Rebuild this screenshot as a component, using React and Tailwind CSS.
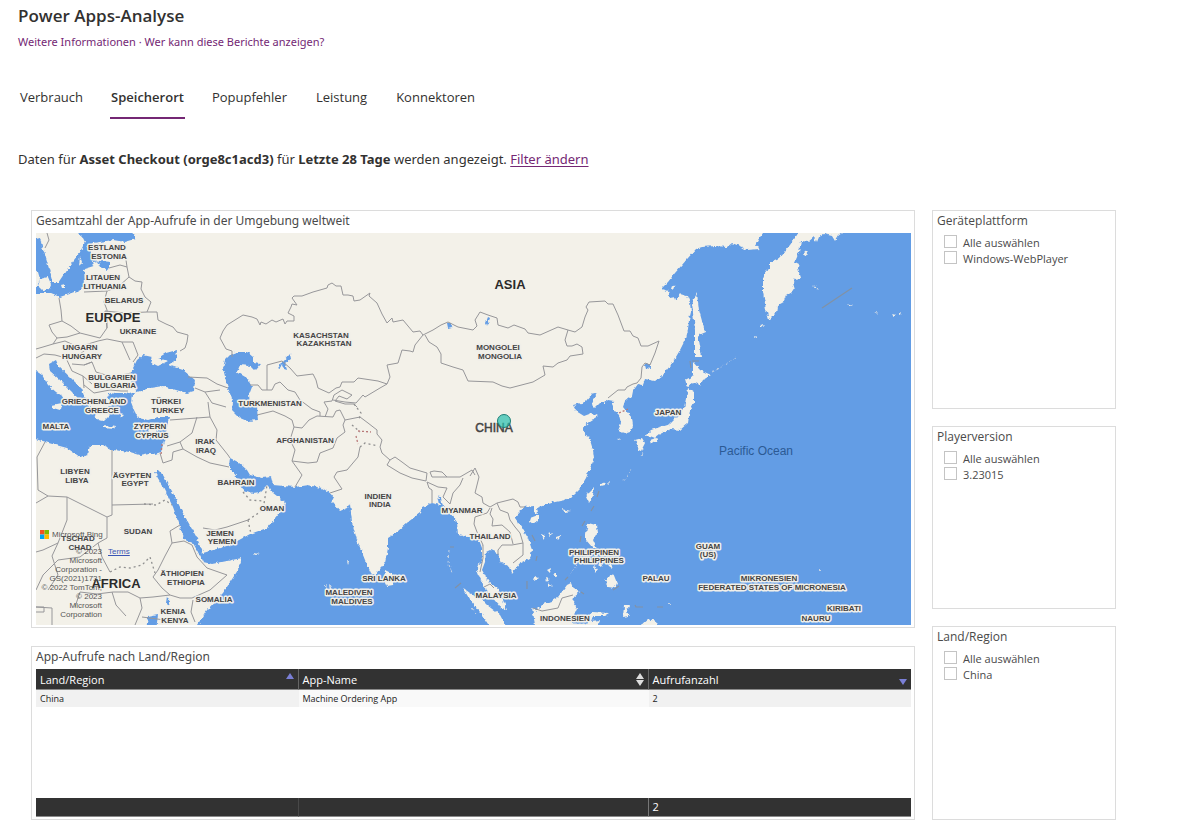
import React from "react";

const WATER = [
  // Indian Ocean, Red Sea, Persian Gulf, Pacific
  "M915,630 L915,229 L842,229 L842,233 L838,236 L835,241 L832,236 L824,234 L818,237 L816,242 L814,237 L808,242 L801,241 L799,252 L795,262 L799,264 L798,268 L801,278 L795,279 L793,283 L795,290 L786,296 L783,303 L777,306 L776,313 L769,320 L766,309 L763,292 L763,279 L766,271 L770,268 L770,262 L779,258 L790,245 L797,235 L800,229 L765,229 L763,233 L758,240 L755,246 L760,249 L747,250 L742,247 L732,243 L727,247 L715,246 L702,247 L696,249 L688,258 L682,265 L675,273 L668,282 L661,289 L668,291 L670,298 L675,297 L676,300 L680,294 L687,296 L690,303 L691,312 L689,320 L688,330 L686,338 L680,350 L673,362 L663,375 L655,381 L645,379 L643,385 L638,384 L633,391 L632,396 L625,401 L623,407 L627,412 L632,418 L633,426 L630,431 L624,433 L618,431 L621,423 L619,415 L615,411 L612,405 L614,401 L608,400 L604,403 L600,403 L595,408 L592,405 L596,395 L593,393 L585,402 L573,405 L576,411 L584,416 L592,413 L598,416 L590,421 L583,427 L585,433 L590,440 L593,450 L594,458 L590,468 L586,478 L580,488 L573,495 L565,500 L555,502 L545,505 L537,508 L538,514 L534,512 L534,506 L525,507 L519,512 L515,518 L522,528 L528,538 L532,550 L530,558 L520,563 L512,573 L510,567 L501,562 L497,553 L490,550 L486,552 L485,562 L482,570 L486,577 L490,583 L497,588 L503,600 L507,610 L500,607 L492,597 L486,590 L480,578 L477,570 L482,558 L482,548 L477,535 L468,537 L458,535 L457,522 L450,513 L443,507 L441,498 L438,494 L440,505 L432,503 L422,507 L420,513 L408,522 L397,532 L388,538 L388,548 L385,563 L378,572 L375,577 L371,573 L365,560 L357,540 L352,522 L350,503 L347,508 L340,511 L332,502 L334,498 L330,493 L322,488 L308,485 L295,487 L273,485 L271,477 L262,478 L250,475 L247,470 L238,462 L230,458 L229,467 L237,477 L243,490 L253,493 L260,492 L267,485 L270,488 L273,493 L285,502 L283,508 L275,518 L267,528 L250,534 L230,545 L203,553 L197,538 L183,513 L173,493 L163,475 L158,470 L155,473 L163,487 L173,507 L180,527 L185,540 L193,543 L199,554 L203,562 L212,564 L242,558 L238,570 L223,593 L207,610 L195,630 Z",
  // Mediterranean with the Adriatic
  "M32,371 L36,371 L42,375 L48,385 L56,392 L64,397 L67,405 L71,400 L79,401 L73,393 L60,380 L50,371 L49,364 L56,360 L59,367 L70,377 L82,389 L85,398 L88,404 L93,412 L98,420 L104,421 L110,415 L106,408 L113,405 L108,397 L115,393 L124,393 L132,395 L131,402 L134,410 L138,418 L148,420 L158,417 L170,417 L167,427 L165,438 L161,452 L155,454 L150,453 L140,455 L130,452 L113,450 L102,445 L90,445 L88,455 L80,457 L67,448 L45,442 L32,438 Z",
  // Black Sea and Sea of Azov
  "M135,389 L131,382 L132,370 L137,360 L143,355 L152,357 L150,362 L158,366 L168,361 L158,358 L166,353 L177,350 L176,360 L168,365 L183,370 L195,380 L194,391 L187,393 L176,390 L163,386 L150,388 L137,392 Z",
  "M108,395 L112,392 L124,396 L138,391 L128,397 L116,399 Z",
  // Caspian Sea
  "M223,368 L225,360 L230,355 L238,352 L247,352 L253,357 L253,363 L261,364 L255,371 L250,366 L240,365 L237,372 L247,378 L252,387 L249,395 L250,407 L257,407 L258,420 L247,421 L240,418 L232,410 L233,402 L227,385 Z",
  // Baltic Sea
  "M73,229 L130,229 L136,239 L125,242 L113,240 L93,243 L87,247 L92,254 L92,260 L110,262 L110,268 L107,270 L97,265 L84,269 L85,285 L80,290 L60,297 L50,293 L36,293 L32,292 L32,240 L40,238 L42,246 L45,255 L50,272 L53,283 L58,283 L68,268 L80,252 L85,242 L82,236 Z",
  // Lakes
  "M278,365 L283,362 L290,354 L291,359 L285,363 L287,370 L284,369 L282,364 L279,370 Z",
  "M447,323 L451,323 L452,327 L448,328 Z",
  "M488,317 L490,318 L487,326 L486,322 Z",
  "M645,364 L650,363 L650,369 L646,368 Z",
  "M148,617 L158,615 L156,630 L146,630 Z",
  "M167,596 L170,601 L169,606 L166,603 Z",
];

const ISLANDS = [
  "M697,293 L699,310 L705,332 L698,335 L702,357 L695,357 L695,330 L692,303 Z",
  "M693,362 L700,370 L711,375 L703,380 L700,385 L693,382 L687,387 L685,380 L693,376 Z",
  "M688,388 L694,392 L694,403 L690,410 L688,423 L680,430 L671,429 L660,434 L655,438 L650,436 L644,437 L651,430 L660,427 L670,424 L676,418 L684,409 Z",
  "M635,440 L642,438 L645,443 L641,451 L637,450 L638,444 Z",
  "M650,440 L656,438 L657,441 L651,443 Z",
  "M588,493 L594,487 L593,496 L589,503 L586,497 Z",
  "M530,518 L538,515 L538,520 L533,524 L529,521 Z",
  "M588,523 L596,525 L597,533 L593,540 L597,549 L603,551 L592,547 L586,540 L586,533 Z",
  "M613,573 L617,583 L615,588 L608,587 L605,580 L609,578 Z",
  "M600,559 L604,561 L601,567 L598,565 Z M607,557 L611,562 L613,569 L609,566 Z M594,566 L598,569 L595,573 Z",
  "M532,608 L536,611 L543,604 L552,601 L558,597 L567,585 L571,583 L573,588 L580,592 L574,597 L573,603 L577,608 L573,617 L573,630 L536,630 Z",
  "M463,588 L470,593 L480,598 L487,605 L500,615 L508,630 L492,630 L480,612 L470,600 Z",
  "M588,618 L592,612 L610,613 L605,616 L593,616 L591,621 L600,620 L595,630 L588,630 Z",
  "M624,606 L629,606 L626,612 L629,616 L623,617 Z",
  "M642,624 L648,619 L656,621 L661,630 L646,630 Z",
  "M385,570 L391,573 L395,578 L393,585 L387,586 L384,580 Z",
  "M40,279 L48,277 L51,284 L49,289 L43,291 L38,286 Z M32,268 L38,272 L40,279 L36,288 L32,288 Z",
  "M80,256 L82,262 L79,267 Z M61,285 L65,284 L65,288 L62,288 Z",
  "M92,262 L98,261 L100,265 L94,268 Z",
  "M104,425 L115,427 L114,429 L104,428 Z M148,430 L160,427 L156,432 L150,433 Z",
  "M116,407 L119,408 L117,412 Z M120,414 L124,415 L121,418 Z M110,402 L114,402 L113,405 Z",
  "M52,405 L62,403 L60,410 L53,408 Z",
  "M601,483 L604,482 L605,485 L601,486 Z M607,482 L610,483 L608,485 Z M562,509 L571,511 L565,512 Z",
  "M541,534 L546,536 L543,540 Z M550,532 L552,534 L549,536 Z M556,537 L562,535 L558,540 Z",
  "M547,570 L551,568 L550,573 Z M553,575 L557,573 L557,578 Z M546,578 L549,579 L547,582 Z M535,576 L539,578 L534,581 Z M548,583 L552,585 L549,587 Z",
  "M601,231 L603,232 L602,234 Z M804,253 L808,250 L806,256 Z M813,284 L818,290 L815,288 Z M847,304 L852,306 L849,306 Z M892,313 L896,314 L893,316 Z M899,314 L902,312 L901,315 Z",
  "M760,326 L765,325 L762,328 Z M754,336 L757,337 L755,338 Z M253,553 L259,554 L255,555 Z",
  "M672,286 L675,287 L674,290 L671,289 Z M617,439 L621,438 L619,440 Z",
  "M347,561 L349,562 L348,565 Z M325,583 L327,588 L326,592 Z M329,583 L331,588 L330,592 Z",
];

const BORDERS = [
  "M232,357 L232,351 L226,349 L220,338 L223,331 L227,325 L235,320 L243,315 L252,317 L257,319 L260,325 L261,322 L266,324 L272,320 L276,322 L283,319 L285,324 L287,321 L294,321 L294,316 L288,313 L291,307 L292,304 L297,305 L292,298 L294,296 L302,296 L313,292 L327,288 L328,285 L332,283 L336,286 L341,286 L343,295 L348,295 L353,296 L354,301 L360,300 L370,293 L369,296 L377,303 L382,314 L387,323 L392,318 L393,322 L403,320 L413,332 L420,331 L423,335 L433,330 L441,325 L448,322 L458,327 L473,330 L477,326 L475,320 L480,312 L488,315 L497,318 L498,325 L508,328 L514,325 L525,329 L528,333 L540,335 L558,327 L568,330 L575,332 L582,327 L585,317 L588,310 L586,307 L589,302 L605,301 L608,304 L613,304 L618,315 L624,331 L630,331 L633,336 L638,338 L641,346 L648,346 L659,341 L655,353 L650,365 L645,363 L642,367 L641,378 L637,383 L633,384 L627,387 L625,390 L618,390 L608,398",
  "M425,335 L429,342 L437,347 L441,354 L441,363 L453,367 L463,370 L468,381 L493,382 L502,386 L510,388 L533,382 L545,375 L543,366 L553,367 L558,363 L567,360 L570,356 L583,354 L582,347 L577,344 L572,346 L567,346 L565,340 L568,330",
  "M423,335 L415,345 L413,352 L410,351 L402,350 L398,363 L387,365 L390,377 L387,384 L380,388 L365,397 L363,395 L356,403 L345,402 L333,400",
  "M387,384 L378,381 L358,378 L354,382 L342,382 L340,387 L336,388 L329,393 L318,388 L316,380 L313,374 L297,376 L290,368 L282,361 L267,365 L267,390 L262,390 L258,385 L250,385",
  "M267,390 L272,390 L275,384 L280,382 L288,390 L295,392 L300,400 L312,409 L320,412 L320,416",
  "M257,415 L273,411 L285,416 L292,420 L294,427 L302,428 L309,420 L317,416 L333,417 L336,411 L340,410 L345,420 L360,417 L368,423 L377,430 L377,434 L382,440 L380,447",
  "M325,417 L328,409 L324,402 L332,401 L334,395 L342,390 L352,395 L347,399 L339,396 L335,401 L345,404 L354,404 L357,407",
  "M294,427 L290,440 L295,450 L292,461 L302,475 L295,487 M292,461 L308,463 L317,462 L320,453 L333,448 L337,438 L345,432 L343,425 L345,420",
  "M360,447 L358,457 L347,470 L337,472 L334,477 L342,489 L330,493 M380,447 L382,453 L390,460 L395,457 L402,462 L410,468 L427,473 M390,460 L387,465 L400,473 L412,478 L426,481 L427,473 M430,472 L432,477 L447,477 L442,472 L434,471 Z M447,477 L460,477 L472,470 L475,475",
  "M427,482 L429,488 L432,490 L432,503 M427,482 L438,487 L447,488 L443,497 L450,504 L453,493 L460,485 L463,478",
  "M470,476 L475,468 L479,477 L475,493 L482,497 L483,503 L490,507 L497,503 L513,499 L518,502 L520,507 L525,507",
  "M497,503 L500,510 L508,513 L510,520 L515,527 L520,533 L523,543 L512,545 L502,545 L498,550 L498,555 M523,543 L523,555 L513,563 M492,508 L490,514 L493,519 L492,526 L502,525 L510,532 L513,544 M490,508 L487,513 L475,517 L474,524 L477,532 L483,545 L483,558 L480,572 M484,587 L490,584 L494,588",
  "M533,608 L542,611 L558,608 L562,598 L573,595",
  "M47,233 L49,240 L45,248 M126,260 L127,267 L129,277 L118,287 L107,291 L84,292 M109,268 L120,265 L127,267 M129,277 L135,281 L142,282 L141,289 L145,297 L151,302 L147,312 L157,312 L158,320 L166,324 L173,327 L177,332 L188,335 L187,342 L185,348 L180,351",
  "M107,291 L104,302 L107,310 L107,328 L100,338 L80,333 L71,326 L62,321 L61,310 L59,298 M62,321 L49,325 L52,332 L57,338 L67,337 L80,333 M57,338 L53,344 L43,347 L36,349 M53,344 L65,341 L78,347 L98,341 L107,339 L122,342 L133,342 L138,355 L133,362 M122,342 L130,360 M107,328 L105,311 L125,313 L147,312 M36,358 L44,354 L55,355 L66,358 L80,354 L92,345",
  "M66,358 L72,371 L83,376 L84,388 M84,365 L92,362 L96,372 L112,377 L131,373 M84,385 L94,393 L110,390 L121,391 L128,391 M83,376 L92,384 M72,364 L84,365 L92,362",
  "M188,377 L207,378 L217,384 L228,388 M195,388 L205,392 L212,403 L226,407 M205,392 L220,390 M208,402 L209,410 L210,417 L170,420 M210,417 L217,430 L216,440 L228,455 L230,458 M197,417 L192,433 L180,442 L167,446 M180,442 L183,449 L197,457 L210,463 L229,467 M183,449 L173,452 L172,460 L163,463 L160,453",
  "M112,450 L112,505 L112,515 L107,517 L67,497 L48,496 L36,503 M45,442 L37,457 L38,490 L48,496 M112,505 L153,504 M107,517 L107,538 L98,543 L102,557 L110,572 M67,497 L67,520 L58,543 L43,550 L36,552 M98,543 L80,557 L58,560 L43,575 L36,590 M58,543 L52,556 L58,575 L48,590",
  "M172,543 L165,556 L158,570 L153,577 L162,588 L170,595 L180,598 L192,598 L210,590 L227,575 L207,568 L197,557 L192,545 L184,541 Z M172,543 L170,531 L180,525 M193,600 L191,612 L195,622 M140,598 L142,608 L135,625 M80,592 L97,594 L113,592 L128,592 L140,598 L153,597 L170,595 M36,607 L52,608 L52,625 M112,592 L116,605 L126,616 M142,617 L180,622 M75,607 L80,592",
  "M203,528 L215,530 L227,527 L248,520 M36,607 L44,607 L44,612 L36,612",
];

const DOTTED = "M248,520 L251,534 M248,520 L263,510 L267,485 M243,492 L250,500 L263,501 M110,572 L120,567 L130,568 L142,565 L150,557 L155,573 M144,504 L156,505 L165,500 L172,505 M352,425 L360,432 M360,447 L365,443 L378,446 M354,404 L361,413 L359,419";
const DOTTED_RED = "M358,431 L371,432 M356,436 L358,444 M619,413 L628,409 M162,444 L161,455";
const SEA_LINES = "M822,308 L852,288 M599,491 L597,497 M594,506 L591,511 M585,521 L582,526 M581,536 L580,542 M532,535 L535,541 M537,556 L536,561 M527,581 L527,589 M565,580 L568,577 M581,592 L584,594 M613,590 L619,586 M635,605 L636,607 L643,607 M657,607 L663,607 M450,547 L454,547 M455,588 L461,583 M692,361 L699,361 M690,361 L691,368";
const FAINT_ISLANDS = "M712,372 L718,369 L724,365 L731,361 L736,357 M643,453 L642,457 M623,481 L631,470 M449,550 L448,562 L452,573 M569,575 L577,566 M472,608 L476,613 M668,603 L670,605 M819,569 L821,571 M875,312 L877,315";

// [text, centre x, baseline y]
const LABELS = [
  ["ESTLAND", 107, 250], ["ESTONIA", 109, 259],
  ["LITAUEN", 103, 280], ["LITHUANIA", 105, 289],
  ["BELARUS", 124, 303], ["UKRAINE", 138, 334],
  ["UNGARN", 80, 350], ["HUNGARY", 82, 359],
  ["BULGARIEN", 112, 380], ["BULGARIA", 115, 388],
  ["GRIECHENLAND", 94, 404], ["GREECE", 102, 413],
  ["TÜRKEI", 166, 404], ["TURKEY", 168, 413],
  ["MALTA", 56, 429], ["ZYPERN", 150, 429], ["CYPRUS", 152, 438],
  ["IRAK", 205, 444], ["IRAQ", 206, 453],
  ["LIBYEN", 75, 474], ["LIBYA", 77, 483],
  ["ÄGYPTEN", 132, 478], ["EGYPT", 135, 486],
  ["BAHRAIN", 236, 485], ["SUDAN", 138, 534],
  ["JEMEN", 220, 536], ["YEMEN", 222, 544],
  ["TSCHAD", 78, 541], ["CHAD", 80, 550],
  ["ÄTHIOPIEN", 182, 576], ["ETHIOPIA", 186, 585],
  ["SOMALIA", 214, 602], ["KENIA", 173, 614], ["KENYA", 175, 623],
  ["KASACHSTAN", 321, 338], ["KAZAKHSTAN", 324, 346],
  ["TURKMENISTAN", 270, 406], ["AFGHANISTAN", 305, 443],
  ["OMAN", 272, 511], ["INDIEN", 378, 499], ["INDIA", 380, 507],
  ["SRI LANKA", 384, 581], ["MALEDIVEN", 349, 595], ["MALDIVES", 352, 604],
  ["MONGOLEI", 498, 350], ["MONGOLIA", 500, 359],
  ["MYANMAR", 462, 513], ["THAILAND", 490, 539],
  ["PHILIPPINEN", 594, 555], ["PHILIPPINES", 599, 563],
  ["PALAU", 656, 581], ["MALAYSIA", 496, 598],
  ["INDONESIEN", 565, 621], ["INDONESIA", 568, 630],
  ["JAPAN", 668, 415], ["GUAM", 708, 549], ["(US)", 708, 557],
  ["MIKRONESIEN", 769, 581], ["FEDERATED STATES OF MICRONESIA", 772, 590],
  ["KIRIBATI", 844, 611], ["NAURU", 816, 621],
];

const CONTINENTS = [["EUROPE", 113, 322], ["ASIA", 510, 289], ["AFRICA", 116, 588]];

function WorldMap() {
  return (
    <svg viewBox="36 233 875 392" className="block w-full" role="img" aria-label="Karte der App-Aufrufe">
      <defs>
        <filter id="coast" filterUnits="userSpaceOnUse" x="30" y="228" width="890" height="402">
          <feTurbulence type="fractalNoise" baseFrequency="0.25" numOctaves="2" seed="4" result="n" />
          <feDisplacementMap in="SourceGraphic" in2="n" scale="4" xChannelSelector="R" yChannelSelector="G" />
        </filter>
      </defs>
      <rect x="36" y="233" width="875" height="392" fill="#f3f1e9" />
      <g filter="url(#coast)">
        <path d={WATER.join(" ")} fill="#649de5" />
        <path d={ISLANDS.join(" ")} fill="#f3f1e9" />
        <path d={FAINT_ISLANDS} fill="none" stroke="#c3d3e6" strokeWidth="1" strokeDasharray="3 2" />
      </g>
      <path d={BORDERS.join(" ")} fill="none" stroke="#97979a" strokeWidth="1" strokeLinejoin="round" />
      <path d={DOTTED} fill="none" stroke="#909090" strokeWidth="1.3" strokeDasharray="2 3" />
      <path d={DOTTED_RED} fill="none" stroke="#b87878" strokeWidth="1.3" strokeDasharray="2 2" />
      <path d={SEA_LINES} fill="none" stroke="#8291a5" strokeWidth="1.2" />
      <g textAnchor="middle" className="font-['Liberation_Sans',Arial,sans-serif] [paint-order:stroke]">
        <g className="text-[8px] font-bold" fill="#444444" stroke="#f0efea" strokeWidth="3" strokeLinejoin="round">
          {LABELS.map(([t, x, y]) => (
            <text key={t} x={x} y={y}>{t}</text>
          ))}
        </g>
        <g className="text-[13px] font-bold" fill="#2b2b2b" stroke="#f3f1e9" strokeWidth="2">
          {CONTINENTS.map(([t, x, y]) => (
            <text key={t} x={x} y={y}>{t}</text>
          ))}
        </g>
        <text x="494" y="432" className="text-[12px]" fill="#444444" stroke="#444444" strokeWidth="0.5">CHINA</text>
        <text x="756" y="455" className="text-[12px]" fill="#2c5a94">Pacific Ocean</text>
      </g>
      <circle cx="504" cy="421" r="6.5" fill="#26bfae" fillOpacity="0.7" stroke="#1f7f76" strokeWidth="1" />
    </svg>
  );
}

function MapAttribution() {
  return (
    <div className="absolute bottom-[6px] left-1 font-['Liberation_Sans',Arial,sans-serif] text-[8px] leading-[9px] text-[#555]">
      <div className="mb-2 flex items-center gap-[3px]">
        <svg viewBox="0 0 9 9" className="size-[9px]" aria-hidden="true">
          <path d="M0 0h4.5v4.5H0z" fill="#f25022" />
          <path d="M4.5 0H9v4.5H4.5z" fill="#7fba00" />
          <path d="M0 4.5h4.5V9H0z" fill="#00a4ef" />
          <path d="M4.5 4.5H9V9H4.5z" fill="#ffb900" />
        </svg>
        Microsoft Bing
      </div>
      <div className="flex items-start gap-[6px]">
        <div className="w-[62px] text-right whitespace-nowrap">
          <p>© 2023</p>
          <p>Microsoft</p>
          <p>Corporation -</p>
          <p>GS(2021)1731</p>
          <p>© 2022 TomTom,</p>
          <p>© 2023</p>
          <p>Microsoft</p>
          <p>Corporation</p>
        </div>
        <a href="#terms" className="text-[#3a55b4] underline">Terms</a>
      </div>
    </div>
  );
}

const TABS = ["Verbrauch", "Speicherort", "Popupfehler", "Leistung", "Konnektoren"];

function FilterCard({ id, title, options, className }) {
  return (
    <fieldset className={"border border-[#dcdcdc] pl-1 " + className}>
      <legend className="float-left w-full pt-[2px] text-[12px] leading-4 text-[#4a4a4a]">{title}</legend>
      <div className="clear-both pt-[6px] pl-[7px]">
        {options.map((o, i) => (
          <label key={o} htmlFor={id + i} className="flex h-4 items-start gap-[6px] text-[11px] leading-4 text-[#4a4a4a]">
            <input id={id + i} type="checkbox" className="size-[13px] appearance-none border border-[#c4c4c4] bg-white checked:bg-[#742774]" />
            {o}
          </label>
        ))}
      </div>
    </fieldset>
  );
}

function Up({ className }) {
  return (
    <svg viewBox="0 0 8 6" className={"block h-[6px] w-2 " + className} aria-hidden="true">
      <path d="M4 0L8 6H0z" fill="currentColor" />
    </svg>
  );
}

function Down({ className }) {
  return (
    <svg viewBox="0 0 8 6" className={"block h-[6px] w-2 " + className} aria-hidden="true">
      <path d="M4 6L8 0H0z" fill="currentColor" />
    </svg>
  );
}

function HeaderCell({ children, icon, last }) {
  return (
    <th scope="col" className={"h-[21px] border-b border-[#8a8a8a] p-0 font-normal " + (last ? "" : "border-r border-r-[#666]")}>
      <button type="button" className="flex h-5 w-full items-center justify-between pt-px pr-1 pl-1 text-left text-[11px] leading-5">
        {children}
        {icon}
      </button>
    </th>
  );
}

export default function App() {
  return (
    <main className="min-h-screen bg-white font-['Open_Sans','Noto_Sans',sans-serif] text-[#323130]">
      <header className="px-[18px] pt-1">
        <h1 className="text-[17px] leading-6 font-semibold">Power Apps-Analyse</h1>
        <p className="mt-1 font-['Noto_Sans','Open_Sans',sans-serif] text-[11px] leading-5 text-[#742774]">
          <a href="#info">Weitere Informationen</a> · <a href="#zugriff">Wer kann diese Berichte anzeigen?</a>
        </p>
      </header>

      <div role="tablist" className="mt-[24px] flex gap-[25px] pl-[18px] text-[13px] leading-5">
        {TABS.map((t) =>
          t === "Speicherort" ? (
            <button key={t} type="button" role="tab" aria-selected="true" className="h-[43px] border-b-2 border-[#742774] px-px font-semibold">
              {t}
            </button>
          ) : (
            <button key={t} type="button" role="tab" aria-selected="false" className="h-[43px] border-b-2 border-transparent px-[2px]">
              {t}
            </button>
          )
        )}
      </div>

      <p className="mt-[30px] px-[18px] font-['Noto_Sans','Open_Sans',sans-serif] text-[13px] leading-5">
        Daten für <strong>Asset Checkout (orge8c1acd3)</strong> für <strong>Letzte 28 Tage</strong> werden angezeigt.{" "}
        <a href="#filter" className="text-[#742774] underline underline-offset-2">Filter ändern</a>
      </p>

      <div className="mt-[41px] flex items-start gap-[17px] pr-[72px] pb-[7px] pl-[31px]">
        <div className="flex min-w-0 flex-1 flex-col gap-[18px]">
          <section className="border border-[#dcdcdc] pr-[3px] pb-[2px] pl-1">
            <h2 className="h-[22px] font-['Noto_Sans','Open_Sans',sans-serif] text-[12px] leading-5 text-[#4a4a4a]">Gesamtzahl der App-Aufrufe in der Umgebung weltweit</h2>
            <div className="relative overflow-hidden">
              <WorldMap />
              <MapAttribution />
            </div>
          </section>

          <section className="border border-[#dcdcdc] pr-[3px] pb-[2px] pl-1">
            <h2 className="h-[22px] font-['Noto_Sans','Open_Sans',sans-serif] text-[12px] leading-5 text-[#4a4a4a]">App-Aufrufe nach Land/Region</h2>
            <table className="w-full table-fixed border-separate border-spacing-0 text-left">
              <colgroup>
                <col className="w-[30%]" />
                <col className="w-[40%]" />
                <col className="w-[30%]" />
              </colgroup>
              <thead className="bg-[#323232] text-white">
                <tr>
                  <HeaderCell icon={<Up className="mb-2 text-[#7a7fd6]" />}>Land/Region</HeaderCell>
                  <HeaderCell
                    icon={
                      <span className="flex flex-col gap-px text-[#dddddd]">
                        <Up className="" />
                        <Down className="" />
                      </span>
                    }
                  >
                    App-Name
                  </HeaderCell>
                  <HeaderCell last icon={<Down className="mt-1 text-[#7a7fd6]" />}>Aufrufanzahl</HeaderCell>
                </tr>
              </thead>
              <tbody className="text-[9px] leading-[17px] text-[#222]">
                <tr>
                  <td className="bg-[#f1f1f1] py-0 pl-1">China</td>
                  <td className="bg-[#f9f9f9] py-0 pl-1">Machine Ordering App</td>
                  <td className="bg-[#f1f1f1] py-0 pl-1">2</td>
                </tr>
                <tr aria-hidden="true">
                  <td colSpan={3} className="h-[91px] p-0"></td>
                </tr>
              </tbody>
              <tfoot className="bg-[#323232] text-[11px] leading-[18px] text-white">
                <tr>
                  <td className="border-r border-b border-r-[#484848] border-b-[#8a8a8a] p-0"></td>
                  <td className="border-r border-b border-r-[#777] border-b-[#8a8a8a] p-0"></td>
                  <td className="border-b border-[#8a8a8a] py-0 pl-1">2</td>
                </tr>
              </tfoot>
            </table>
          </section>
        </div>

        <aside className="flex w-[184px] flex-col gap-[17px]">
          <FilterCard id="platform" title="Geräteplattform" options={["Alle auswählen", "Windows-WebPlayer"]} className="min-h-[199px]" />
          <FilterCard id="version" title="Playerversion" options={["Alle auswählen", "3.23015"]} className="min-h-[183px]" />
          <FilterCard id="region" title="Land/Region" options={["Alle auswählen", "China"]} className="min-h-[194px]" />
        </aside>
      </div>
    </main>
  );
}
